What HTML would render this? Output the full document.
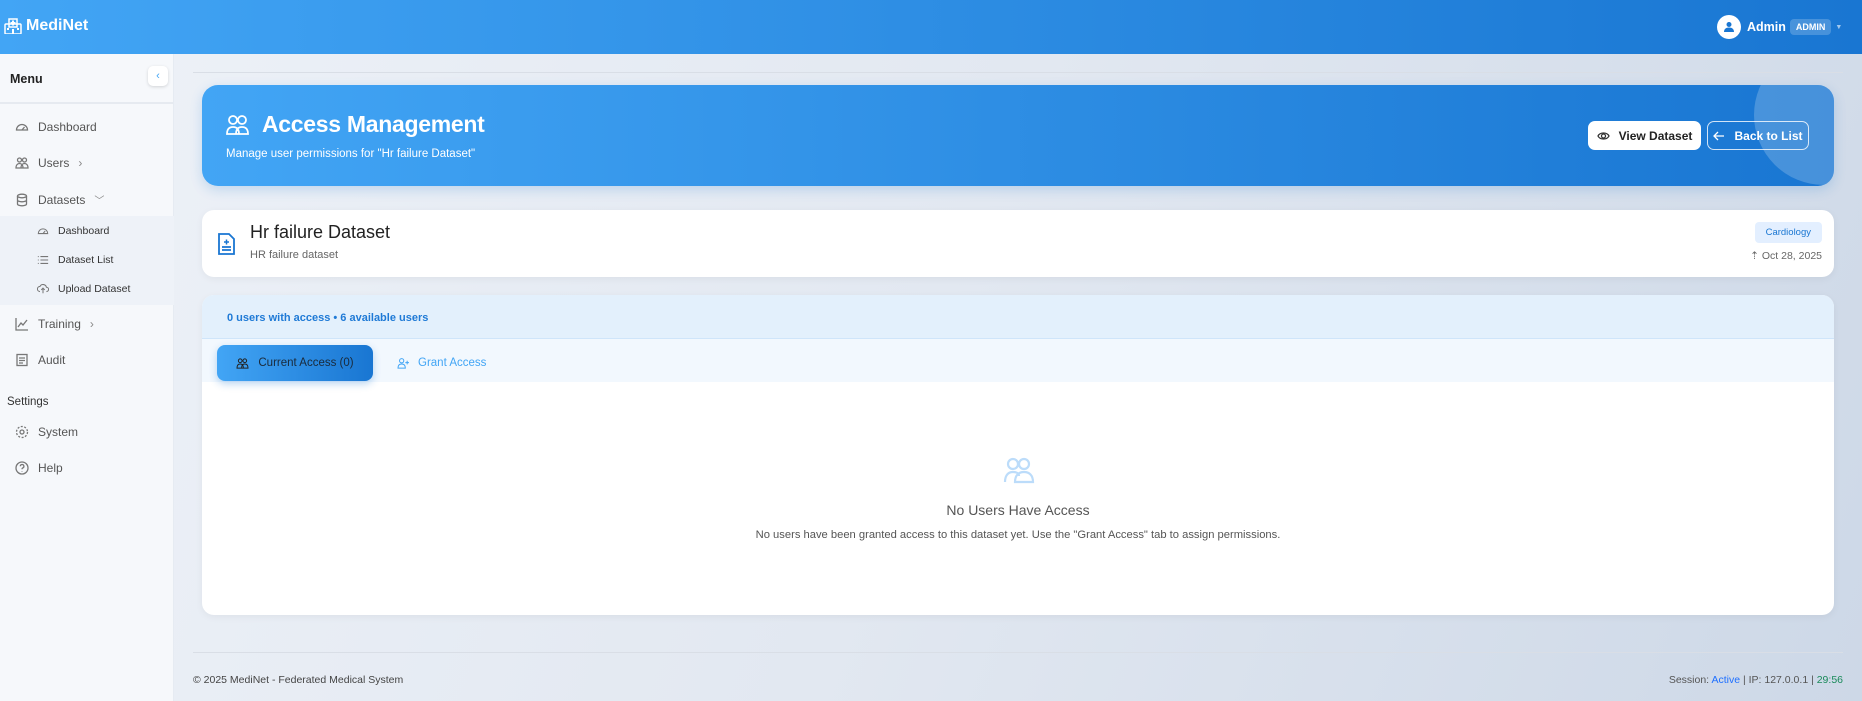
<!DOCTYPE html>
<html><head><meta charset="utf-8"><style>
*{box-sizing:border-box;margin:0;padding:0}
body{width:1862px;height:701px;overflow:hidden;font-family:"Liberation Sans",sans-serif;background:linear-gradient(110deg,#eef2f8 0%,#e2e8f1 50%,#cdd8e7 100%);position:relative;color:#333}
.hdr{position:absolute;left:0;top:0;width:1862px;height:54px;background:linear-gradient(90deg,#42a5f5,#1976d2);color:#fff}
.logo{position:absolute;left:4px;top:17px;font-weight:bold;font-size:16px;display:flex;align-items:center;gap:4px}
.user{position:absolute;left:1717px;top:15px;display:flex;align-items:center;font-weight:bold;font-size:12.5px}
.av{width:24px;height:24px;border-radius:50%;background:#fff;display:flex;align-items:center;justify-content:center;margin-right:6px}
.badge{background:rgba(255,255,255,.2);font-size:9px;padding:3px 6px;border-radius:4px;margin-left:4px}
.side{position:absolute;left:0;top:54px;width:174px;height:647px;background:#f6f8fb;border-right:1px solid #e6ebf2}
.mh{height:50px;border-bottom:2px solid #e6eaf0;position:relative}
.mh span{position:absolute;left:10px;top:18px;font-size:12.5px;font-weight:bold;color:#222}
.cb{position:absolute;left:148px;top:12px;width:20px;height:20px;border-radius:5px;background:#fff;box-shadow:0 1px 3px rgba(0,0,0,.15);color:#42a5f5;font-size:11px;text-align:center;line-height:20px}
.ni{position:absolute;left:15px;font-size:12px;color:#555;display:flex;align-items:center;gap:9px}
.ni svg{width:14px;height:14px;stroke:#777;fill:none;stroke-width:1.3}
.sub{position:absolute;left:0;top:162px;width:174px;height:89px;background:#eef2f8}
.si{position:absolute;left:37px;font-size:10.5px;color:#333;display:flex;align-items:center;gap:9px}
.si svg{width:12px;height:12px;stroke:#777;fill:none;stroke-width:1.2}
.line{position:absolute;left:193px;width:1650px;height:1px;background:#d9dee6}
.hero{position:absolute;left:202px;top:85px;width:1632px;height:101px;border-radius:16px;background:linear-gradient(90deg,#42a5f5,#1976d2);overflow:hidden;color:#fff;box-shadow:0 4px 12px rgba(25,118,210,.2)}
.hero .circ{position:absolute;right:-60px;top:-40px;width:140px;height:140px;border-radius:50%;background:rgba(255,255,255,.2)}
.hero h1{position:absolute;left:24px;top:26px;font-size:23px;font-weight:bold;display:flex;align-items:center;gap:12px;letter-spacing:-.3px}
.hero p{position:absolute;left:24px;top:63px;font-size:11.5px}
.btn{position:absolute;top:36px;height:29px;border-radius:7px;font-size:12px;font-weight:bold;display:flex;align-items:center;justify-content:center;gap:9px}
.card{position:absolute;left:202px;width:1632px;background:#fff;border-radius:12px;box-shadow:0 2px 8px rgba(0,0,0,.05)}
.tag{position:absolute;right:12px;top:12px;background:#e3efff;color:#1976d2;font-size:9.5px;padding:5px 11px;border-radius:4px}
</style></head><body>
<div class="hdr">
 <div class="logo"><svg width="18" height="16" viewBox="0 0 18 16" fill="#fff"><rect x="1" y="6" width="16" height="10" rx="1" fill="none" stroke="#fff" stroke-width="1.5"/><rect x="5" y="1" width="8" height="8" fill="none" stroke="#fff" stroke-width="1.5"/><rect x="8" y="2.5" width="2" height="5"/><rect x="6.5" y="4" width="5" height="2"/><rect x="3" y="10" width="2" height="2"/><rect x="13" y="10" width="2" height="2"/><rect x="8" y="11" width="2" height="5"/></svg>MediNet</div>
 <div class="user"><div class="av"><svg width="12" height="12" viewBox="0 0 12 12" fill="#1976d2"><circle cx="6" cy="3.5" r="2.5"/><path d="M1 11c0-3 2-4.5 5-4.5s5 1.5 5 4.5z"/></svg></div>Admin<span class="badge">ADMIN</span><span style="margin-left:4px;font-size:7px;opacity:.6">▼</span></div>
</div>
<div class="side">
 <div class="mh"><span>Menu</span><div class="cb">‹</div></div>
 <div class="ni" style="top:66px"><svg viewBox="0 0 14 14"><path d="M1.5 10a5.5 5.5 0 1 1 11 0z"/><path d="M7 10l2.5-3"/></svg>Dashboard</div>
 <div class="ni" style="top:102px"><svg viewBox="0 0 14 14"><circle cx="4.5" cy="4" r="2"/><circle cx="9.5" cy="4" r="2"/><path d="M1 12c0-3 1.5-4.5 3.5-4.5S8 9 8 12zM6 12c0-3 1.5-4.5 3.5-4.5S13 9 13 12z"/></svg>Users <span style="color:#888">›</span></div>
 <div class="ni" style="top:138px"><svg viewBox="0 0 14 14"><ellipse cx="7" cy="3" rx="4.5" ry="1.8"/><path d="M2.5 3v8c0 1 2 1.8 4.5 1.8s4.5-.8 4.5-1.8V3M2.5 7c0 1 2 1.8 4.5 1.8s4.5-.8 4.5-1.8"/></svg>Datasets <span style="color:#888;font-size:10px">﹀</span></div>
 <div class="sub">
  <div class="si" style="top:9px"><svg viewBox="0 0 14 14"><path d="M1.5 10a5.5 5.5 0 1 1 11 0z"/><path d="M7 10l2.5-3"/></svg>Dashboard</div>
  <div class="si" style="top:38px"><svg viewBox="0 0 14 14"><path d="M1 3h1M1 7h1M1 11h1M4 3h9M4 7h9M4 11h9"/></svg>Dataset List</div>
  <div class="si" style="top:67px"><svg viewBox="0 0 14 14"><path d="M3.5 10a3 3 0 0 1 0-6 4 4 0 0 1 7.5 1 2.5 2.5 0 0 1 0 5M7 12V6M5 8l2-2 2 2"/></svg>Upload Dataset</div>
 </div>
 <div class="ni" style="top:263px"><svg viewBox="0 0 14 14"><path d="M1 1v12h12M3 10l3-4 2 2 4-5"/></svg>Training <span style="color:#888">›</span></div>
 <div class="ni" style="top:299px"><svg viewBox="0 0 14 14"><rect x="2" y="1.5" width="10" height="11"/><path d="M4 5h6M4 7.5h6M4 10h4"/></svg>Audit</div>
 <div style="position:absolute;left:7px;top:342px;font-size:11.5px;color:#333">Settings</div>
 <div class="ni" style="top:371px"><svg viewBox="0 0 14 14"><circle cx="7" cy="7" r="2"/><circle cx="7" cy="7" r="5.5" stroke-dasharray="2 1.5"/></svg>System</div>
 <div class="ni" style="top:407px"><svg viewBox="0 0 14 14"><circle cx="7" cy="7" r="6"/><path d="M5.3 5.3a1.8 1.8 0 1 1 2.4 1.7c-.5.2-.7.6-.7 1.2M7 10v.5"/></svg>Help</div>
</div>
<div class="line" style="top:72px"></div>
<div class="hero"><div class="circ"></div>
 <h1><svg width="24" height="22" viewBox="0 0 24 22" fill="none" stroke="#fff" stroke-width="1.8"><circle cx="7" cy="6" r="4"/><circle cx="16" cy="6" r="4"/><path d="M1 20c0-5 2.5-7 6-7s6 2 6 7zM10 20c0-5 2.5-7 6-7s6 2 6 7z"/></svg>Access Management</h1>
 <p>Manage user permissions for "Hr failure Dataset"</p>
 <div class="btn" style="left:1386px;width:113px;background:#fff;color:#222"><svg width="13" height="10" viewBox="0 0 13 10" fill="none" stroke="#333" stroke-width="1.3"><path d="M1 5c2-4 9-4 11 0-2 4-9 4-11 0z"/><circle cx="6.5" cy="5" r="2"/></svg>View Dataset</div>
 <div class="btn" style="left:1505px;width:102px;border:1.3px solid rgba(255,255,255,.8);color:#fff"><svg width="12" height="10" viewBox="0 0 12 10" fill="none" stroke="#fff" stroke-width="1.3"><path d="M11 5H1M5 1L1 5l4 4"/></svg>Back to List</div>
</div>
<div class="card" style="top:210px;height:67px">
 <svg style="position:absolute;left:15px;top:22px" width="19" height="24" viewBox="0 0 19 24" fill="none" stroke="#1976d2" stroke-width="1.8"><path d="M2 2h10l5 5v15H2z"/><path d="M5 15h9M5 18h9" /><path d="M7 10h5M9.5 7.5v5" stroke-width="1.5"/></svg>
 <div style="position:absolute;left:48px;top:12px;font-size:18px;color:#222">Hr failure Dataset</div>
 <div style="position:absolute;left:48px;top:39px;font-size:11px;color:#666">HR failure dataset</div>
 <div class="tag">Cardiology</div>
 <div style="position:absolute;right:12px;top:40px;font-size:10.5px;color:#666">⇡ Oct 28, 2025</div>
</div>
<div class="card" style="top:295px;height:320px;overflow:hidden">
 <div style="height:44px;background:#e3f0fc;border-bottom:1px solid #cfe5fa;font-size:11px;font-weight:bold;color:#1f7ad6;padding:17px 0 0 25px">0 users with access • 6 available users</div>
 <div style="height:43px;background:#f2f8fe;position:relative">
  <div style="position:absolute;left:15px;top:6px;width:156px;height:36px;border-radius:8px;background:linear-gradient(90deg,#42a5f5,#1976d2);box-shadow:0 3px 8px rgba(25,118,210,.3);font-size:11.5px;color:#1a2a3a;display:flex;align-items:center;justify-content:center;gap:9px"><svg width="13" height="11" viewBox="0 0 14 12" fill="none" stroke="#222" stroke-width="1.1"><circle cx="4.5" cy="3" r="2"/><circle cx="9.5" cy="3" r="2"/><path d="M1 11c0-3 1.5-4.5 3.5-4.5S8 8 8 11zM6 11c0-3 1.5-4.5 3.5-4.5S13 8 13 11z"/></svg>Current Access (0)</div>
  <div style="position:absolute;left:195px;top:18px;font-size:11.5px;color:#42a5f5;display:flex;align-items:center;gap:8px"><svg width="13" height="11" viewBox="0 0 14 12" fill="none" stroke="#42a5f5" stroke-width="1.1"><circle cx="5" cy="3" r="2.3"/><path d="M1 11c0-3 1.5-4.5 4-4.5S9 8 9 11zM11 3v4M9 5h4"/></svg>Grant Access</div>
 </div>
 <svg style="position:absolute;left:801px;top:162px" width="32" height="27" viewBox="0 0 32 27" fill="none" stroke="#bcdcfa" stroke-width="2.2"><circle cx="10" cy="7" r="5"/><circle cx="21" cy="7" r="5"/><path d="M2 25c0-7 3.5-10 8-10s6 2 6 4M12 25c0-7 4-10 9-10s9 3 9 10z"/></svg>
 <div style="position:absolute;left:0;width:100%;top:207px;text-align:center;font-size:14px;color:#555">No Users Have Access</div>
 <div style="position:absolute;left:0;width:100%;top:234px;text-align:center;font-size:11.2px;color:#555">No users have been granted access to this dataset yet. Use the "Grant Access" tab to assign permissions.</div>
</div>
<div class="line" style="top:652px"></div>
<div style="position:absolute;left:193px;top:674px;font-size:10.5px;color:#444">© 2025 MediNet - Federated Medical System</div>
<div style="position:absolute;right:19px;top:674px;font-size:10.5px;color:#555">Session: <span style="color:#1e6fff">Active</span> | IP: 127.0.0.1 | <span style="color:#1a8a5a">29:56</span></div>
</body></html>
